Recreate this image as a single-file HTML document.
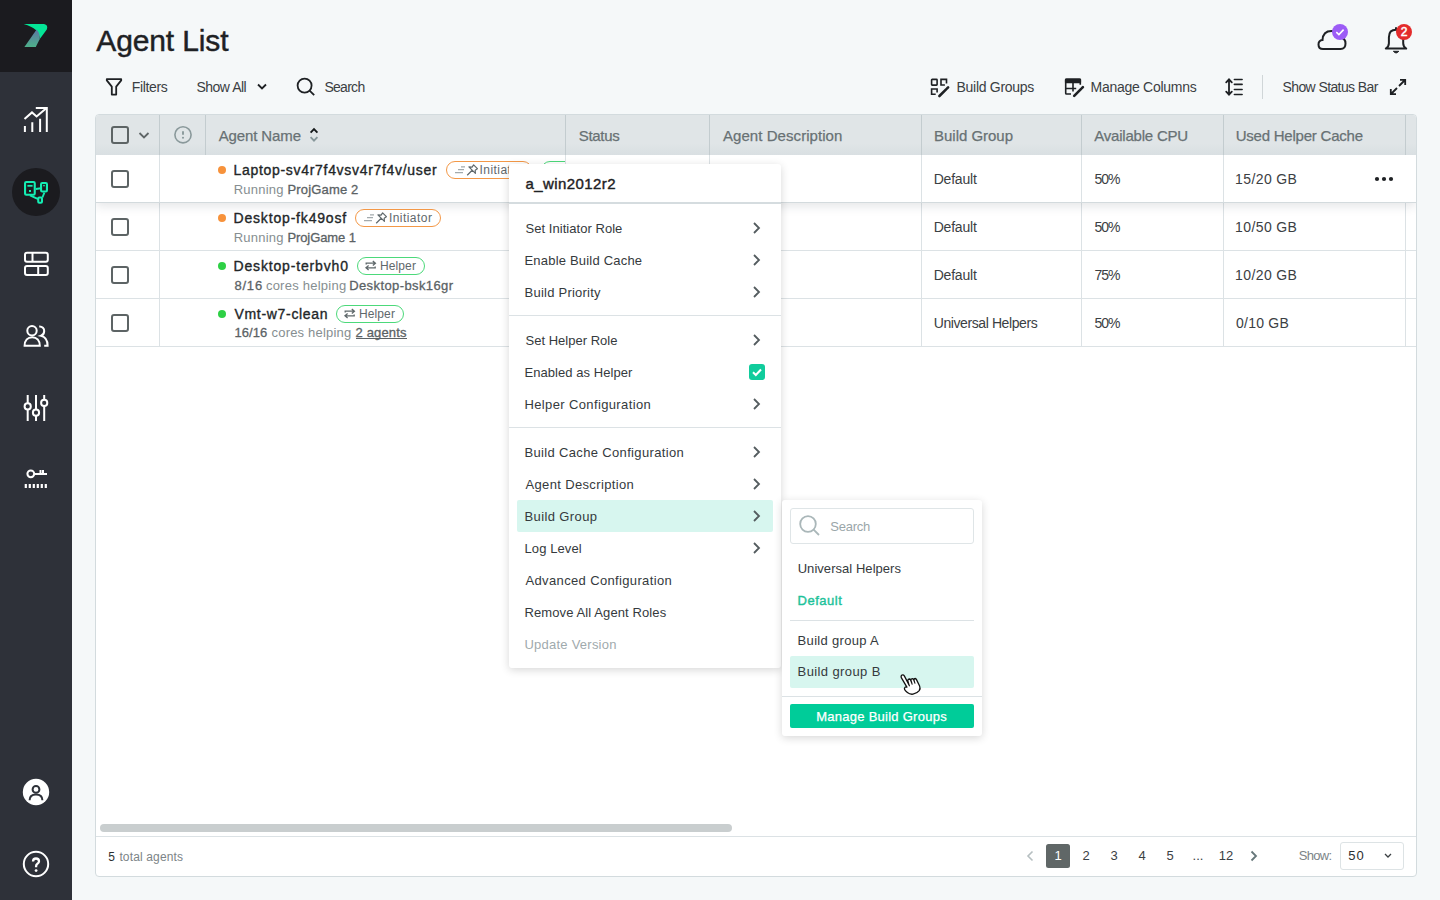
<!DOCTYPE html>
<html><head><meta charset="utf-8">
<style>
*{box-sizing:border-box;margin:0;padding:0}
html,body{width:1440px;height:900px;overflow:hidden}
body{background:#f5f8f9;font-family:"Liberation Sans",sans-serif;color:#2b2f31;position:relative}
.a{position:absolute;white-space:nowrap}
svg{position:absolute;overflow:visible}
#side{position:absolute;left:0;top:0;width:72px;height:900px;background:#2e3139}
#logo{position:absolute;left:0;top:0;width:72px;height:72px;background:#1b1b1f}
#tbl{position:absolute;left:95px;top:114px;width:1322px;height:763px;background:#fff;border:1px solid #d3dbde;border-radius:4px}
.hl{position:absolute;height:1px;background:#dce2e5}
.vl{position:absolute;width:1px;background:#dce2e5}
.cb{position:absolute;width:18px;height:18px;border:2px solid #5d6465;border-radius:3px}
.dot{position:absolute;width:8px;height:8px;border-radius:50%}
.badge{position:absolute;height:18px;border:1px solid;border-radius:9px;background:#fff}
.menu{position:absolute;background:#fff;box-shadow:0 2px 8px rgba(0,0,0,.16);border-radius:3px}
</style></head><body>
<div id="side"></div><div id="logo"></div>
<svg width="72" height="72" style="left:0;top:0">
  <defs><linearGradient id="lg" x1="0" y1="0" x2="0" y2="1"><stop offset="0" stop-color="#5d76a3"/><stop offset="1" stop-color="#4db08a"/></linearGradient></defs>
  <path d="M23.7,24 L44,24 Q48.5,24.8 46.8,29.5 L39.6,39.2 Q40,28.5 23.7,24 Z" fill="#04e596"/>
  <path d="M36.6,29.6 Q40.2,33 39.6,39.2 L35.8,46.9 L24.4,46.9 Z" fill="url(#lg)"/>
</svg>
<svg width="72" height="40" style="left:0;top:100px" fill="none" stroke="#fff" stroke-width="2">
  <path d="M24.5,19 L32,12.4 L36.6,16.4 L46,8.6"/>
  <path d="M35.8,8 H46.8 V32"/>
  <path d="M24.9,26 V32 M32.3,22.3 V32 M40.1,18.8 V32"/>
</svg>
<div class="a" style="left:12px;top:168px;width:48px;height:48px;border-radius:50%;background:#1b1b1f"></div>
<svg width="72" height="40" style="left:0;top:172px" fill="none" stroke="#14eeb3" stroke-width="2.1">
  <rect x="25.05" y="10.05" width="9.7" height="12.7" rx="1.2"/>
  <path d="M27.4,13.8 H32.6" stroke-width="1.8"/>
  <rect x="29" y="18" width="2" height="2" fill="#14eeb3" stroke="none"/>
  <rect x="41.05" y="11.05" width="5.9" height="8.5" rx="1.2"/>
  <circle cx="44" cy="13.6" r="0.9" fill="#14eeb3" stroke="none"/>
  <rect x="38.25" y="25.45" width="3.7" height="5.3" rx="1"/>
  <path d="M35.8,17 L41,16.2 M30,23.4 L38.2,27.2 M44.4,20.6 L42.4,25.5" stroke-width="1.9"/>
</svg>
<svg width="72" height="40" style="left:0;top:245px" fill="none" stroke="#fff" stroke-width="2">
  <rect x="25" y="7.8" width="22.8" height="9" rx="2"/>
  <rect x="25" y="21" width="22.8" height="9" rx="2"/>
  <path d="M32.5,7.8 V16.8 M38.2,21 V30"/>
</svg>
<svg width="72" height="40" style="left:0;top:315px" fill="none" stroke="#fff" stroke-width="2">
  <circle cx="32" cy="15.8" r="4.7"/>
  <path d="M24.6,30.8 C24.6,25.4 27.8,22.2 32.2,22.2 C36.6,22.2 39.8,25.4 39.8,30.8 Z"/>
  <path d="M39.2,11.6 C42.4,11.4 44.2,13.6 44.2,16 C44.2,18.4 42.8,20.2 41,20.8 C45,21.8 47.6,25.4 47.6,30.8 H44.2"/>
</svg>
<svg width="72" height="40" style="left:0;top:385px" fill="none" stroke="#fff" stroke-width="2">
  <path d="M27.7,10 V36 M36,10 V36 M44.2,10 V36"/>
  <circle cx="27.7" cy="21.4" r="3.1" fill="#2e3139"/>
  <circle cx="36" cy="27.7" r="3.1" fill="#2e3139"/>
  <circle cx="44.2" cy="17.9" r="3.1" fill="#2e3139"/>
</svg>
<svg width="72" height="40" style="left:0;top:455px" fill="none" stroke="#fff" stroke-width="2">
  <circle cx="30.8" cy="18.8" r="3.4"/>
  <path d="M34.2,19 H47 M40.5,15 V19 M43,15 V19"/>
  <path d="M25.8,29 V33 M29.8,29 V33 M33.8,29 V33 M37.8,29 V33 M41.8,29 V33 M45.8,29 V33" stroke-width="2.2"/>
</svg>
<svg width="72" height="40" style="left:0;top:772px">
  <circle cx="36" cy="20" r="13.2" fill="#fff"/>
  <circle cx="36" cy="17.4" r="3.4" fill="none" stroke="#2e3139" stroke-width="2"/>
  <path d="M29.6,28.2 Q29.6,22.4 36,22.4 Q42.4,22.4 42.4,28.2" fill="none" stroke="#2e3139" stroke-width="2"/>
</svg>
<svg width="72" height="40" style="left:0;top:844px" fill="none" stroke="#fff" stroke-width="2">
  <circle cx="36" cy="20" r="12.2"/>
  <path d="M33,17.6 Q33,14.5 36,14.5 Q39,14.5 39,17.2 Q39,19 37.2,19.9 Q36.1,20.5 36.1,22.2 V23.2" stroke-width="2.3"/>
  <circle cx="36.1" cy="26.6" r="1.4" fill="#fff" stroke="none"/>
</svg>

<div class="a" style="left:96.25px;top:31px;font-size:30px;line-height:20px;color:#1e2124;letter-spacing:-0.120px;-webkit-text-stroke:0.45px #1e2124;">Agent List</div>
<svg width="40" height="40" style="left:1312px;top:20px" fill="none" stroke="#1e2124" stroke-width="2">
  <path d="M11,29 Q6.5,29 6.5,24.5 Q6.5,20.5 10.5,20 Q11,11 19.5,11 Q26,11 28,17.5 Q33.5,18 33.5,23.5 Q33.5,29 28.5,29 Z"/>
</svg>
<div class="a" style="left:1332px;top:24px;width:16px;height:16px;border-radius:50%;background:#9c5cf6"></div>
<svg width="16" height="16" style="left:1332px;top:24px" fill="none" stroke="#fff" stroke-width="1.6"><path d="M4.3,8.2 L6.9,10.6 L11.6,5.6"/></svg>
<svg width="40" height="40" style="left:1376px;top:20px" fill="none" stroke="#1e2124" stroke-width="2" stroke-linejoin="round">
  <path d="M12.9,23.2 V17.2 Q12.9,9.8 20.1,9.8 Q27.2,9.8 27.2,17.2 V23.2 Q27.2,26.6 30.2,28.6 H9.8 Q12.9,26.6 12.9,23.2 Z"/>
  <path d="M17.4,31.3 Q20.1,34.6 22.8,31.3 Z" fill="#1e2124" stroke-width="1"/>
  <path d="M20,7.2 V9.8"/>
</svg>
<div class="a" style="left:1396px;top:24px;width:16px;height:16px;border-radius:50%;background:#e32b2b"></div>

<div class="a" style="left:1400.80px;top:22px;font-size:12px;line-height:20px;color:#fff;-webkit-text-stroke:0.5px #fff;">2</div>
<svg width="20" height="20" style="left:104px;top:77px" fill="none" stroke="#1e2124" stroke-width="1.8" stroke-linejoin="round">
  <path d="M2.8,2.2 H17.2 V3.4 L12.2,9.6 V17.6 H7.8 V9.6 L2.8,3.4 Z"/>
</svg>
<svg width="12" height="10" style="left:256px;top:82px" fill="none" stroke="#1e2124" stroke-width="1.8"><path d="M2,2.5 L6,6.5 L10,2.5"/></svg>
<svg width="20" height="20" style="left:296px;top:77px" fill="none" stroke="#1e2124" stroke-width="1.8">
  <circle cx="8.6" cy="8.6" r="7"/><path d="M13.6,13.6 L18.2,18.2"/>
</svg>
<svg width="20" height="20" style="left:929px;top:78px" fill="none" stroke="#1e2124" stroke-width="1.6">
  <rect x="2.6" y="1.4" width="5.5" height="5.7" rx="0.6"/>
  <path d="M15.9,7.05 H12 V1.4 H17.5 V5.5"/>
  <path d="M6.7,16.2 H2.6 V11 H8.1 V14.5"/>
  <path d="M10.4,18 L17.1,11.3" stroke-width="2.6" stroke-linecap="round"/>
  <path d="M18.1,10.3 L19.1,9.3" stroke-width="2.6" stroke-linecap="round"/>
</svg>
<svg width="20" height="20" style="left:1064px;top:78px" fill="none" stroke="#1e2124" stroke-width="1.6">
  <path d="M16.3,6.7 V2.2 Q16.3,1.4 15.5,1.4 H2.5 Q1.7,1.4 1.7,2.2 V15.2 Q1.7,16 2.5,16 H7"/>
  <rect x="0.9" y="0.6" width="16.2" height="4.65" rx="1" fill="#1e2124" stroke="none"/>
  <path d="M9,5 V13.6 M1.7,10.45 H12.2"/>
  <path d="M10.2,17.8 L16.9,11.1" stroke-width="2.6" stroke-linecap="round"/>
  <path d="M17.9,10.1 L18.9,9.1" stroke-width="2.6" stroke-linecap="round"/>
</svg>
<svg width="20" height="20" style="left:1224px;top:77px" fill="none" stroke="#1e2124" stroke-width="1.6" stroke-linecap="round">
  <path d="M5,2.6 V17.4 M2.2,5.4 L5,2.4 L7.8,5.4 M2.2,14.6 L5,17.6 L7.8,14.6" stroke-width="1.8"/>
  <path d="M10.4,2.5 H18.1 M10.4,7.4 H18.1 M10.4,12.5 H18.1 M10.4,17.5 H18.1"/>
</svg>
<div class="a" style="left:1262px;top:75px;width:1px;height:24px;background:#d0d6d8"></div>
<svg width="20" height="20" style="left:1388px;top:77px" fill="none" stroke="#1e2124" stroke-width="1.8">
  <path d="M11,9 L17,3 M12,2.8 H17.2 V8 M3,17 L9,11 M2.8,12 V17.2 H8"/>
</svg>

<div class="a" style="left:131.70px;top:77px;font-size:14px;line-height:20px;color:#3b4043;letter-spacing:-0.352px;">Filters</div>
<div class="a" style="left:196.40px;top:77px;font-size:14px;line-height:20px;color:#3b4043;letter-spacing:-0.480px;">Show All</div>
<div class="a" style="left:324.40px;top:77px;font-size:14px;line-height:20px;color:#3b4043;letter-spacing:-0.714px;">Search</div>
<div class="a" style="left:956.50px;top:77px;font-size:14px;line-height:20px;color:#3b4043;letter-spacing:-0.285px;">Build Groups</div>
<div class="a" style="left:1090.50px;top:77px;font-size:14px;line-height:20px;color:#3b4043;letter-spacing:-0.271px;">Manage Columns</div>
<div class="a" style="left:1282.50px;top:77px;font-size:14px;line-height:20px;color:#3b4043;letter-spacing:-0.601px;">Show Status Bar</div>
<div id="tbl"></div>
<div class="a" style="left:96px;top:115px;width:1320px;height:40px;background:linear-gradient(#e0e5e7 0,#e0e5e7 70%,#d9dfe2 100%);border-radius:3px 3px 0 0"></div>
<div class="vl" style="left:159px;top:115px;height:40px;background:#c3cccf"></div>
<div class="vl" style="left:205px;top:115px;height:40px;background:#c3cccf"></div>
<div class="vl" style="left:565px;top:115px;height:40px;background:#c3cccf"></div>
<div class="vl" style="left:709px;top:115px;height:40px;background:#c3cccf"></div>
<div class="vl" style="left:921px;top:115px;height:40px;background:#c3cccf"></div>
<div class="vl" style="left:1081px;top:115px;height:40px;background:#c3cccf"></div>
<div class="vl" style="left:1223px;top:115px;height:40px;background:#c3cccf"></div>
<div class="vl" style="left:1405px;top:115px;height:40px;background:#c3cccf"></div>
<div class="vl" style="left:159px;top:155px;height:192px"></div>
<div class="vl" style="left:565px;top:155px;height:192px"></div>
<div class="vl" style="left:709px;top:155px;height:192px"></div>
<div class="vl" style="left:921px;top:155px;height:192px"></div>
<div class="vl" style="left:1081px;top:155px;height:192px"></div>
<div class="vl" style="left:1223px;top:155px;height:192px"></div>
<div class="vl" style="left:1405px;top:202px;height:145px"></div>
<div class="hl" style="left:96px;top:250px;width:1320px"></div>
<div class="hl" style="left:96px;top:298px;width:1320px"></div>
<div class="hl" style="left:96px;top:346px;width:1320px"></div>
<div class="a" style="left:96px;top:155px;width:1320px;height:100px;overflow:hidden"><div class="a" style="left:0;top:0;width:1320px;height:47px;background:#fff;box-shadow:0 4px 10px rgba(40,50,60,.13)"></div></div>
<div class="vl" style="left:159px;top:155px;height:47px"></div>
<div class="vl" style="left:565px;top:155px;height:47px"></div>
<div class="vl" style="left:709px;top:155px;height:47px"></div>
<div class="vl" style="left:921px;top:155px;height:47px"></div>
<div class="vl" style="left:1081px;top:155px;height:47px"></div>
<div class="vl" style="left:1223px;top:155px;height:47px"></div>
<div class="hl" style="left:96px;top:202px;width:1320px;height:1px;background:#d3dadd"></div>
<div class="cb" style="left:111px;top:126px"></div>
<svg width="12" height="10" style="left:138px;top:131px" fill="none" stroke="#5f6667" stroke-width="1.8"><path d="M1.5,2 L6,6.5 L10.5,2"/></svg>
<svg width="20" height="20" style="left:173px;top:125px" fill="none" stroke="#8a999b" stroke-width="1.6"><circle cx="10" cy="9.8" r="8.1"/><path d="M10,6.2 V9.8" stroke-width="1.9"/><circle cx="10" cy="12.8" r="1.05" fill="#8a999b" stroke="none"/></svg>
<svg width="12" height="16" style="left:308px;top:127px" fill="none" stroke-width="1.9"><path d="M2.6,5.6 L6,2.2 L9.4,5.6" stroke="#15191a"/><path d="M2.6,10.2 L6,13.6 L9.4,10.2" stroke="#87979a"/></svg>

<div class="a" style="left:218.70px;top:126px;font-size:15px;line-height:20px;color:#687174;letter-spacing:-0.115px;-webkit-text-stroke:0.25px #687174;">Agent Name</div>
<div class="a" style="left:578.75px;top:126px;font-size:15px;line-height:20px;color:#687174;letter-spacing:-0.305px;-webkit-text-stroke:0.25px #687174;">Status</div>
<div class="a" style="left:723.00px;top:126px;font-size:15px;line-height:20px;color:#687174;letter-spacing:0.059px;-webkit-text-stroke:0.25px #687174;">Agent Description</div>
<div class="a" style="left:934.00px;top:126px;font-size:15px;line-height:20px;color:#687174;letter-spacing:-0.017px;-webkit-text-stroke:0.25px #687174;">Build Group</div>
<div class="a" style="left:1094.30px;top:126px;font-size:15px;line-height:20px;color:#687174;letter-spacing:-0.217px;-webkit-text-stroke:0.25px #687174;">Available CPU</div>
<div class="a" style="left:1235.70px;top:126px;font-size:15px;line-height:20px;color:#687174;letter-spacing:-0.222px;-webkit-text-stroke:0.25px #687174;">Used Helper Cache</div>
<div class="cb" style="left:111px;top:170px"></div>
<div class="cb" style="left:111px;top:218px"></div>
<div class="cb" style="left:111px;top:266px"></div>
<div class="cb" style="left:111px;top:314px"></div>
<div class="dot" style="left:218px;top:166px;background:#f7923b"></div>
<div class="dot" style="left:218px;top:214px;background:#f7923b"></div>
<div class="dot" style="left:218px;top:262px;background:#2ed045"></div>
<div class="dot" style="left:218px;top:310px;background:#2ed045"></div>
<div class="a" style="left:233.50px;top:160px;font-size:14px;line-height:20px;color:#222628;letter-spacing:0.694px;-webkit-text-stroke:0.35px #222628;">Laptop-sv4r7f4vsv4r7f4v/user</div>
<div class="a" style="left:233.50px;top:208px;font-size:14px;line-height:20px;color:#222628;letter-spacing:0.824px;-webkit-text-stroke:0.35px #222628;">Desktop-fk49osf</div>
<div class="a" style="left:233.50px;top:256px;font-size:14px;line-height:20px;color:#222628;letter-spacing:0.841px;-webkit-text-stroke:0.35px #222628;">Desktop-terbvh0</div>
<div class="a" style="left:234.50px;top:304px;font-size:14px;line-height:20px;color:#222628;letter-spacing:0.682px;-webkit-text-stroke:0.35px #222628;">Vmt-w7-clean</div>
<div class="a" style="left:233.70px;top:180px;font-size:13px;line-height:20px;color:#868e91;letter-spacing:0.234px;">Running</div>
<div class="a" style="left:287.40px;top:180px;font-size:13px;line-height:20px;color:#5b6265;letter-spacing:0.174px;-webkit-text-stroke:0.3px #5b6265;">ProjGame 2</div>
<div class="a" style="left:233.70px;top:228px;font-size:13px;line-height:20px;color:#868e91;letter-spacing:0.234px;">Running</div>
<div class="a" style="left:287.40px;top:228px;font-size:13px;line-height:20px;color:#5b6265;letter-spacing:-0.092px;-webkit-text-stroke:0.3px #5b6265;">ProjGame 1</div>
<div class="a" style="left:234.40px;top:276px;font-size:13px;line-height:20px;color:#5b6265;letter-spacing:0.809px;-webkit-text-stroke:0.3px #5b6265;">8/16</div>
<div class="a" style="left:265.90px;top:276px;font-size:13px;line-height:20px;color:#868e91;letter-spacing:0.242px;">cores helping</div>
<div class="a" style="left:349.20px;top:276px;font-size:13px;line-height:20px;color:#5b6265;letter-spacing:0.397px;-webkit-text-stroke:0.3px #5b6265;">Desktop-bsk16gr</div>
<div class="a" style="left:234.40px;top:323px;font-size:13px;line-height:20px;color:#5b6265;letter-spacing:0.100px;-webkit-text-stroke:0.3px #5b6265;">16/16</div>
<div class="a" style="left:271.50px;top:323px;font-size:13px;line-height:20px;color:#868e91;letter-spacing:0.200px;">cores helping</div>
<div class="a" style="left:355.50px;top:323px;font-size:13px;line-height:20px;color:#5b6265;letter-spacing:0.147px;-webkit-text-stroke:0.3px #5b6265;">2 agents</div>
<div class="a" style="left:355.5px;top:338px;width:51.4px;height:1px;background:#5b6265"></div>
<div class="badge" style="left:446px;top:161px;width:86px;border-color:#f39847"></div>
<svg width="24" height="14" style="left:455px;top:164px" fill="none" stroke-width="1.2">
 <path d="M6,2.8 H10 M3,5.7 H9 M0,8.7 H8" stroke="#a3aaad"/>
 <path d="M18.6,0.9 L22.4,4.7 L20.2,6.2 L20.4,9.4 L13.9,2.9 L17.1,3.1 Z M17.2,6.3 L12.2,11.2" stroke="#5f686b" stroke-linejoin="round"/>
</svg>
<div class="a" style="left:479.50px;top:160px;font-size:12px;line-height:20px;color:#5f686b;letter-spacing:0.456px;">Initiator</div>
<div class="a" style="left:96px;top:155px;width:469px;height:47px;overflow:hidden"><div class="badge" style="left:445px;top:6px;width:68px;border-color:#4cd97a"></div></div>
<div class="badge" style="left:355px;top:209px;width:86px;border-color:#f39847"></div>
<svg width="24" height="14" style="left:364px;top:212px" fill="none" stroke-width="1.2">
 <path d="M6,2.8 H10 M3,5.7 H9 M0,8.7 H8" stroke="#a3aaad"/>
 <path d="M18.6,0.9 L22.4,4.7 L20.2,6.2 L20.4,9.4 L13.9,2.9 L17.1,3.1 Z M17.2,6.3 L12.2,11.2" stroke="#5f686b" stroke-linejoin="round"/>
</svg>
<div class="a" style="left:388.90px;top:208px;font-size:12px;line-height:20px;color:#5f686b;letter-spacing:0.456px;">Initiator</div>
<div class="badge" style="left:357px;top:257px;width:68px;border-color:#4cd97a"></div>
<svg width="12" height="10" style="left:365px;top:261px" fill="none" stroke="#5f686b" stroke-width="1.3">
 <path d="M1.2,3.6 V2.2 H10.2 M7.8,0 L10.4,2.2 L7.8,4.4"/>
 <path d="M10.2,5.4 V6.8 H1.2 M3.6,4.6 L1,6.8 L3.6,9"/>
</svg>
<div class="a" style="left:379.90px;top:256px;font-size:12px;line-height:20px;color:#5f686b;letter-spacing:0.129px;">Helper</div>
<div class="badge" style="left:336px;top:305px;width:68px;border-color:#4cd97a"></div>
<svg width="12" height="10" style="left:344px;top:309px" fill="none" stroke="#5f686b" stroke-width="1.3">
 <path d="M1.2,3.6 V2.2 H10.2 M7.8,0 L10.4,2.2 L7.8,4.4"/>
 <path d="M10.2,5.4 V6.8 H1.2 M3.6,4.6 L1,6.8 L3.6,9"/>
</svg>
<div class="a" style="left:358.90px;top:304px;font-size:12px;line-height:20px;color:#5f686b;letter-spacing:0.129px;">Helper</div>
<div class="a" style="left:933.70px;top:169px;font-size:14px;line-height:20px;color:#3b4043;letter-spacing:-0.211px;">Default</div>
<div class="a" style="left:1094.40px;top:169px;font-size:14px;line-height:20px;color:#3b4043;letter-spacing:-0.986px;">50%</div>
<div class="a" style="left:1235.10px;top:169px;font-size:14px;line-height:20px;color:#3b4043;letter-spacing:0.384px;">15/20 GB</div>
<div class="a" style="left:933.70px;top:217px;font-size:14px;line-height:20px;color:#3b4043;letter-spacing:-0.211px;">Default</div>
<div class="a" style="left:1094.40px;top:217px;font-size:14px;line-height:20px;color:#3b4043;letter-spacing:-0.986px;">50%</div>
<div class="a" style="left:1235.10px;top:217px;font-size:14px;line-height:20px;color:#3b4043;letter-spacing:0.384px;">10/50 GB</div>
<div class="a" style="left:933.70px;top:265px;font-size:14px;line-height:20px;color:#3b4043;letter-spacing:-0.211px;">Default</div>
<div class="a" style="left:1094.40px;top:265px;font-size:14px;line-height:20px;color:#3b4043;letter-spacing:-0.986px;">75%</div>
<div class="a" style="left:1235.10px;top:265px;font-size:14px;line-height:20px;color:#3b4043;letter-spacing:0.384px;">10/20 GB</div>
<div class="a" style="left:933.70px;top:313px;font-size:14px;line-height:20px;color:#3b4043;letter-spacing:-0.405px;">Universal Helpers</div>
<div class="a" style="left:1094.40px;top:313px;font-size:14px;line-height:20px;color:#3b4043;letter-spacing:-0.986px;">50%</div>
<div class="a" style="left:1236.10px;top:313px;font-size:14px;line-height:20px;color:#3b4043;letter-spacing:0.212px;">0/10 GB</div>
<svg width="20" height="6" style="left:1374px;top:176px" fill="#1e2124"><circle cx="3" cy="3" r="2.1"/><circle cx="10" cy="3" r="2.1"/><circle cx="17" cy="3" r="2.1"/></svg>
<div class="a" style="left:100px;top:824px;width:632px;height:8px;border-radius:4px;background:#c9cecf"></div>
<div class="hl" style="left:96px;top:836px;width:1320px"></div>
<div class="a" style="left:108.30px;top:847px;font-size:12px;line-height:20px;color:#2b2f31;">5</div>
<div class="a" style="left:119.40px;top:847px;font-size:12px;line-height:20px;color:#7c8487;letter-spacing:0.141px;">total agents</div>
<svg width="10" height="12" style="left:1025px;top:850px" fill="none" stroke="#b6bfc1" stroke-width="1.6"><path d="M7.5,1.5 L3,6 L7.5,10.5"/></svg>
<div class="a" style="left:1046px;top:844px;width:24px;height:24px;border-radius:2.5px;background:#606767"></div>
<div class="a" style="left:1038px;top:846px;width:40px;text-align:center;font-size:13px;line-height:20px;color:#fff">1</div>
<div class="a" style="left:1066px;top:846px;width:40px;text-align:center;font-size:13px;line-height:20px;color:#3b4043">2</div>
<div class="a" style="left:1094px;top:846px;width:40px;text-align:center;font-size:13px;line-height:20px;color:#3b4043">3</div>
<div class="a" style="left:1122px;top:846px;width:40px;text-align:center;font-size:13px;line-height:20px;color:#3b4043">4</div>
<div class="a" style="left:1150px;top:846px;width:40px;text-align:center;font-size:13px;line-height:20px;color:#3b4043">5</div>
<div class="a" style="left:1178px;top:846px;width:40px;text-align:center;font-size:13px;line-height:20px;color:#3b4043">...</div>
<div class="a" style="left:1206px;top:846px;width:40px;text-align:center;font-size:13px;line-height:20px;color:#3b4043">12</div>
<svg width="10" height="12" style="left:1249px;top:850px" fill="none" stroke="#66777a" stroke-width="1.8"><path d="M2.5,1.5 L7,6 L2.5,10.5"/></svg>
<div class="a" style="left:1298.70px;top:846px;font-size:13px;line-height:20px;color:#7c8487;letter-spacing:-0.705px;">Show:</div>
<div class="a" style="left:1340px;top:842px;width:64px;height:28px;border:1px solid #dde3e5;border-radius:3px"></div>
<div class="a" style="left:1348.20px;top:846px;font-size:13px;line-height:20px;color:#2b2f31;letter-spacing:0.970px;">50</div>
<svg width="10" height="8" style="left:1383px;top:852px" fill="none" stroke="#3b4043" stroke-width="1.3"><path d="M2,2 L5,5 L8,2"/></svg>
<div class="menu" style="left:509px;top:164px;width:272px;height:504px"></div>
<div class="a" style="left:509px;top:202px;width:272px;height:2px;background:#d5dcdf"></div>
<div class="a" style="left:525.60px;top:174px;font-size:15px;line-height:20px;color:#1e2124;letter-spacing:0.404px;-webkit-text-stroke:0.4px #1e2124;">a_win2012r2</div>
<div class="a" style="left:509px;top:315px;width:272px;height:1px;background:#dce2e5"></div>
<div class="a" style="left:509px;top:427px;width:272px;height:1px;background:#dce2e5"></div>
<div class="a" style="left:517px;top:500px;width:256px;height:32px;border-radius:2px;background:#d7f6ef"></div>
<div class="a" style="left:525.50px;top:219px;font-size:13px;line-height:20px;color:#353a3d;letter-spacing:0.043px;">Set Initiator Role</div>
<svg width="10" height="12" style="left:751px;top:222px" fill="none" stroke="#545c5f" stroke-width="1.8"><path d="M3,1 L8,6 L3,11"/></svg>
<div class="a" style="left:524.50px;top:251px;font-size:13px;line-height:20px;color:#353a3d;letter-spacing:0.197px;">Enable Build Cache</div>
<svg width="10" height="12" style="left:751px;top:254px" fill="none" stroke="#545c5f" stroke-width="1.8"><path d="M3,1 L8,6 L3,11"/></svg>
<div class="a" style="left:524.50px;top:283px;font-size:13px;line-height:20px;color:#353a3d;letter-spacing:0.241px;">Build Priority</div>
<svg width="10" height="12" style="left:751px;top:286px" fill="none" stroke="#545c5f" stroke-width="1.8"><path d="M3,1 L8,6 L3,11"/></svg>
<div class="a" style="left:525.50px;top:331px;font-size:13px;line-height:20px;color:#353a3d;letter-spacing:0.012px;">Set Helper Role</div>
<svg width="10" height="12" style="left:751px;top:334px" fill="none" stroke="#545c5f" stroke-width="1.8"><path d="M3,1 L8,6 L3,11"/></svg>
<div class="a" style="left:524.50px;top:363px;font-size:13px;line-height:20px;color:#353a3d;letter-spacing:0.061px;">Enabled as Helper</div>
<div class="a" style="left:524.50px;top:395px;font-size:13px;line-height:20px;color:#353a3d;letter-spacing:0.368px;">Helper Configuration</div>
<svg width="10" height="12" style="left:751px;top:398px" fill="none" stroke="#545c5f" stroke-width="1.8"><path d="M3,1 L8,6 L3,11"/></svg>
<div class="a" style="left:524.50px;top:443px;font-size:13px;line-height:20px;color:#353a3d;letter-spacing:0.341px;">Build Cache Configuration</div>
<svg width="10" height="12" style="left:751px;top:446px" fill="none" stroke="#545c5f" stroke-width="1.8"><path d="M3,1 L8,6 L3,11"/></svg>
<div class="a" style="left:525.50px;top:475px;font-size:13px;line-height:20px;color:#353a3d;letter-spacing:0.351px;">Agent Description</div>
<svg width="10" height="12" style="left:751px;top:478px" fill="none" stroke="#545c5f" stroke-width="1.8"><path d="M3,1 L8,6 L3,11"/></svg>
<div class="a" style="left:524.50px;top:507px;font-size:13px;line-height:20px;color:#353a3d;letter-spacing:0.388px;">Build Group</div>
<svg width="10" height="12" style="left:751px;top:510px" fill="none" stroke="#545c5f" stroke-width="1.8"><path d="M3,1 L8,6 L3,11"/></svg>
<div class="a" style="left:524.50px;top:539px;font-size:13px;line-height:20px;color:#353a3d;letter-spacing:0.101px;">Log Level</div>
<svg width="10" height="12" style="left:751px;top:542px" fill="none" stroke="#545c5f" stroke-width="1.8"><path d="M3,1 L8,6 L3,11"/></svg>
<div class="a" style="left:525.50px;top:571px;font-size:13px;line-height:20px;color:#353a3d;letter-spacing:0.356px;">Advanced Configuration</div>
<div class="a" style="left:524.50px;top:603px;font-size:13px;line-height:20px;color:#353a3d;letter-spacing:0.105px;">Remove All Agent Roles</div>
<div class="a" style="left:524.50px;top:635px;font-size:13px;line-height:20px;color:#9faaad;letter-spacing:0.234px;">Update Version</div>
<div class="a" style="left:749px;top:364px;width:16px;height:16px;border-radius:3px;background:#10cc9c"></div>
<svg width="16" height="16" style="left:749px;top:364px" fill="none" stroke="#fff" stroke-width="2"><path d="M4,8.3 L6.8,11 L12,5.5"/></svg>
<div class="menu" style="left:782px;top:500px;width:200px;height:236px"></div>
<div class="a" style="left:790px;top:508px;width:184px;height:36px;border:1px solid #dfe5e7;border-radius:3px"></div>
<svg width="22" height="22" style="left:799px;top:515px" fill="none" stroke="#aab7b9" stroke-width="1.8"><circle cx="9" cy="9" r="7.8"/><path d="M14.6,14.6 L20,20"/></svg>
<div class="a" style="left:790px;top:620px;width:184px;height:1px;background:#dce2e5"></div>
<div class="a" style="left:790px;top:656px;width:184px;height:32px;border-radius:2px;background:#d7f6ef"></div>
<div class="a" style="left:782px;top:696px;width:200px;height:1px;background:#dce2e5"></div>
<div class="a" style="left:790px;top:704px;width:184px;height:24px;border-radius:2px;background:#00cc99"></div>
<div class="a" style="left:830.30px;top:517px;font-size:13px;line-height:20px;color:#9aa6a9;letter-spacing:-0.252px;">Search</div>
<div class="a" style="left:797.70px;top:559px;font-size:13px;line-height:20px;color:#353a3d;letter-spacing:0.044px;">Universal Helpers</div>
<div class="a" style="left:797.60px;top:591px;font-size:13px;line-height:20px;color:#1dc29a;letter-spacing:0.504px;-webkit-text-stroke:0.4px #1dc29a;">Default</div>
<div class="a" style="left:797.60px;top:631px;font-size:13px;line-height:20px;color:#353a3d;letter-spacing:0.318px;">Build group A</div>
<div class="a" style="left:797.60px;top:662px;font-size:13px;line-height:20px;color:#353a3d;letter-spacing:0.393px;">Build group B</div>
<div class="a" style="left:816.20px;top:707px;font-size:13px;line-height:20px;color:#fff;letter-spacing:0.264px;-webkit-text-stroke:0.25px #fff;">Manage Build Groups</div>
<svg width="24" height="24" style="left:898px;top:672px">
  <path d="M3.1,4.6 Q3.2,2.6 5.1,2.8 Q5.8,3 6.3,3.9 L10.9,12.6 L9.8,8.8 Q9.8,7.2 11.2,7 Q12.2,7 12.6,8 L13.6,10.6 L12.9,8.3 Q12.9,6.7 14.2,6.6 Q15.1,6.6 15.6,7.5 L16.4,9.6 L15.9,8 Q16,6.5 17.2,6.5 Q18,6.6 18.5,7.6 L21.6,14 Q22.7,16.6 21.2,18.6 Q19,21.4 15,22.2 Q11.8,22.6 9.4,20.6 Q7.2,18.8 6.6,17.5 Q6,16.2 7.1,15.2 Q8,14.6 8.9,15.2 L3.3,5.6 Z" fill="#fff" stroke="#111" stroke-width="1.3" stroke-linejoin="round"/>
  <path d="M10.9,12.6 L11.6,14.2 M13.6,10.6 L14.3,12.6 M16.4,9.6 L17.1,11.6" fill="none" stroke="#111" stroke-width="1.1"/>
</svg>
</body></html>
